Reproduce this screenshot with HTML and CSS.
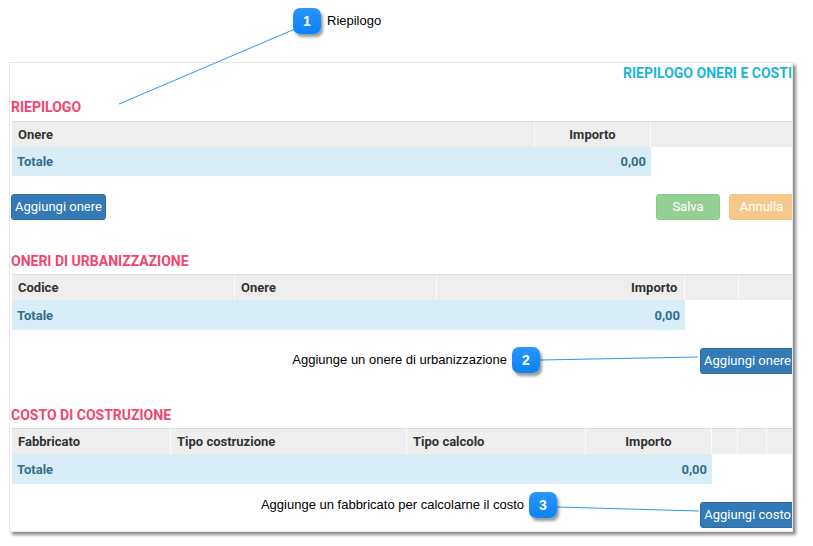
FILE: index.html
```html
<!DOCTYPE html>
<html lang="it">
<head>
<meta charset="utf-8">
<title>Riepilogo oneri e costi</title>
<link rel="stylesheet" href="styles.css">
</head>
<body>
<div class="stage">
  <div class="panel">
    <div class="title">RIEPILOGO ONERI E COSTI</div>

    <section class="sec sec-first">
      <h2 class="heading">RIEPILOGO</h2>
      <table class="grid t1">
        <colgroup><col class="c1"><col class="c2"><col></colgroup>
        <thead><tr><th>Onere</th><th class="center">Importo</th><th></th></tr></thead>
        <tbody><tr class="tot"><td>Totale</td><td class="num">0,00</td><td class="blank"></td></tr></tbody>
      </table>
      <div class="btnrow split">
        <button class="btn btn-primary">Aggiungi onere</button>
        <div class="actions">
          <button class="btn btn-success">Salva</button>
          <button class="btn btn-warning">Annulla</button>
        </div>
      </div>
    </section>

    <section class="sec">
      <h2 class="heading">ONERI DI URBANIZZAZIONE</h2>
      <table class="grid t2">
        <colgroup><col class="c1"><col class="c2"><col class="c3"><col class="c4"><col class="c5"><col></colgroup>
        <thead><tr><th>Codice</th><th>Onere</th><th class="nosep"></th><th class="right">Importo</th><th></th><th></th></tr></thead>
        <tbody><tr class="tot"><td>Totale</td><td></td><td></td><td class="num">0,00</td><td class="blank"></td><td class="blank"></td></tr></tbody>
      </table>
      <div class="btnrow end">
        <button class="btn btn-primary">Aggiungi onere</button>
      </div>
    </section>

    <section class="sec">
      <h2 class="heading">COSTO DI COSTRUZIONE</h2>
      <table class="grid t3">
        <colgroup><col class="c1"><col class="c2"><col class="c3"><col class="c4"><col class="c5"><col class="c6"><col></colgroup>
        <thead><tr><th>Fabbricato</th><th>Tipo costruzione</th><th>Tipo calcolo</th><th class="center">Importo</th><th></th><th></th><th></th></tr></thead>
        <tbody><tr class="tot"><td>Totale</td><td></td><td></td><td class="num">0,00</td><td class="blank"></td><td class="blank"></td><td class="blank"></td></tr></tbody>
      </table>
      <div class="btnrow end">
        <button class="btn btn-primary">Aggiungi costo</button>
      </div>
    </section>
  </div>

  <svg class="leaders" width="813" height="546" viewBox="0 0 813 546" aria-hidden="true">
    <line x1="295" y1="29" x2="119" y2="104"/>
    <line x1="540" y1="360" x2="698" y2="357"/>
    <line x1="557" y1="507" x2="699" y2="511"/>
  </svg>

  <div class="badge b1">1</div>
  <div class="note n1">Riepilogo</div>

  <div class="badge b2">2</div>
  <div class="note n2">Aggiunge un onere di urbanizzazione</div>

  <div class="badge b3">3</div>
  <div class="note n3">Aggiunge un fabbricato per calcolarne il costo</div>
</div>
</body>
</html>
```

FILE: styles.css
```css
* { box-sizing: border-box; }

html, body {
  margin: 0;
  padding: 0;
  background: #ffffff;
}

.stage {
  position: relative;
  width: 813px;
  height: 546px;
  overflow: hidden;
  padding-top: 62px;
  padding-left: 9px;
}

.panel {
  width: 784px;
  height: 470px;
  overflow: hidden;
  background: #ffffff;
  border: 1px solid #e6e6e6;
  box-shadow: 3px 3px 3px rgba(0, 0, 0, 0.45);
  padding-left: 1px;
  font-family: Roboto, "Liberation Sans", Arial, sans-serif;
  font-size: 13px;
  color: #333333;
}

.title {
  text-align: right;
  font-weight: 700;
  font-size: 14px;
  line-height: 20px;
  color: #1bb6d6;
  white-space: nowrap;
}

.sec { margin-top: 31px; }
.sec-first { margin-top: 14px; }

.heading {
  margin: 0 0 3px 0;
  font-size: 14px;
  line-height: 20px;
  font-weight: 700;
  color: #f4456f;
  white-space: nowrap;
}

.sec-first .heading { margin-bottom: 4px; }

.grid {
  margin-left: 1px;
  width: 812px;
  table-layout: fixed;
  border-collapse: separate;
  border-spacing: 0;
}

.grid th {
  height: 26px;
  padding: 0 6px;
  background: #eeeeee;
  border-top: 1px solid #dddddd;
  border-right: 1px solid #fbfbfb;
  text-align: left;
  font-weight: 700;
  font-size: 13px;
  color: #333333;
  white-space: nowrap;
  vertical-align: middle;
}

.grid th.nosep { border-right-color: #eeeeee; }
.grid th.center { text-align: center; }
.grid th.right { text-align: right; padding-right: 7px; }

.grid td {
  height: 30px;
  padding: 0 6px 0 5px;
  background: #d9edf7;
  color: #31708f;
  font-weight: 700;
  font-size: 13px;
  white-space: nowrap;
  vertical-align: middle;
}

.t1 td { height: 29px; }

.grid td.num { text-align: right; padding-right: 5px; }
.grid td.blank { background: #ffffff; }

.t1 .c1 { width: 523px; }
.t1 .c2 { width: 116px; }

.t2 .c1 { width: 223px; }
.t2 .c2 { width: 202px; }
.t2 .c3 { width: 188px; }
.t2 .c4 { width: 60px; }
.t2 .c5 { width: 54px; }

.t3 .c1 { width: 159px; }
.t3 .c2 { width: 236px; }
.t3 .c3 { width: 179px; }
.t3 .c4 { width: 126px; }
.t3 .c5 { width: 26px; }
.t3 .c6 { width: 29px; }

.btnrow {
  display: flex;
  margin-top: 18px;
  height: 26px;
}

.btnrow.split { justify-content: space-between; }
.btnrow.end { justify-content: flex-end; margin-right: -3px; }

.actions {
  display: flex;
  gap: 9px;
  margin-right: -2px;
}

.btn {
  height: 26px;
  margin: 0;
  padding: 0 3px;
  border: 1px solid transparent;
  border-radius: 3px;
  font-family: Roboto, "Liberation Sans", Arial, sans-serif;
  font-size: 13px;
  line-height: 24px;
  color: #ffffff;
  white-space: nowrap;
  cursor: pointer;
}

.btn-primary {
  background: #337ab7;
  border-color: #2e6da4;
}

.btn-success {
  width: 64px;
  background: #5cb85c;
  border-color: #4cae4c;
  opacity: 0.65;
}

.btn-warning {
  width: 65px;
  background: #f0ad4e;
  border-color: #eea236;
  opacity: 0.65;
}

.leaders {
  position: absolute;
  left: 0;
  top: 0;
  pointer-events: none;
}

.leaders line {
  stroke: #2f93f5;
  stroke-width: 1;
}

.badge {
  position: absolute;
  width: 28px;
  height: 26px;
  border-radius: 7px;
  background: linear-gradient(#2a95ff, #0b82f6);
  box-shadow: 2px 3px 3px rgba(0, 0, 0, 0.4);
  color: #ffffff;
  font-family: "Liberation Sans", Arial, sans-serif;
  font-weight: 700;
  font-size: 14px;
  line-height: 26px;
  text-align: center;
}

.b1 { left: 293px; top: 8px; }
.b2 { left: 512px; top: 347px; }
.b3 { left: 529px; top: 492px; }

.note {
  position: absolute;
  font-family: "Liberation Sans", Arial, sans-serif;
  font-size: 13px;
  line-height: 15px;
  color: #000000;
  white-space: nowrap;
}

.n1 { left: 327px; top: 13px; }
.n2 { right: 306px; top: 352px; }
.n3 { right: 289px; top: 497px; }
```
